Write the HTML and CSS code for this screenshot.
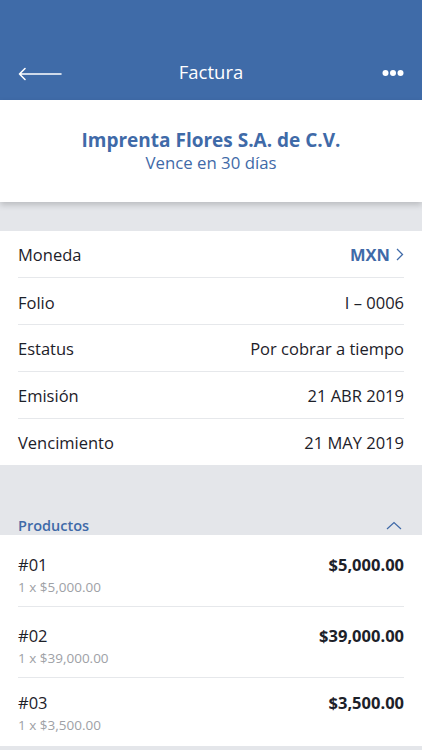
FILE: index.html
```html
<!DOCTYPE html>
<html lang="es">
<head>
<meta charset="utf-8">
<title>Factura</title>
<link rel="stylesheet" href="styles.css">
</head>
<body>
<div class="app">
  <header class="topbar">
    <svg class="back" width="44" height="14" viewBox="0 0 44 14"><path d="M1.5 7H43M7 1.5L1.5 7L7 12.5" fill="none" stroke="#fff" stroke-width="1.6" stroke-linecap="round" stroke-linejoin="round"/></svg>
    <h1 class="title">Factura</h1>
    <svg class="more" width="22" height="8" viewBox="0 0 22 8"><circle cx="3.5" cy="4" r="3" fill="#fff"/><circle cx="11" cy="4" r="3" fill="#fff"/><circle cx="18.5" cy="4" r="3" fill="#fff"/></svg>
  </header>
  <section class="client">
    <div class="client-name">Imprenta Flores S.A. de C.V.</div>
    <div class="client-due">Vence en 30 días</div>
  </section>
  <div class="gap"></div>
  <section class="details">
    <div class="row"><span class="label">Moneda</span><span class="value link">MXN <svg class="chev" width="8" height="13" viewBox="0 0 8 13"><path d="M1 1L6.5 6.5L1 12" fill="none" stroke="#3f6aa8" stroke-width="1.3"/></svg></span></div>
    <div class="row"><span class="label">Folio</span><span class="value">I – 0006</span></div>
    <div class="row"><span class="label">Estatus</span><span class="value">Por cobrar a tiempo</span></div>
    <div class="row"><span class="label">Emisión</span><span class="value">21 ABR 2019</span></div>
    <div class="row"><span class="label">Vencimiento</span><span class="value">21 MAY 2019</span></div>
  </section>
  <div class="section-head">
    <span class="section-title">Productos</span>
    <svg class="up" width="16" height="9" viewBox="0 0 16 9"><path d="M1 8L8 1.5L15 8" fill="none" stroke="#3f6aa8" stroke-width="1.2"/></svg>
  </div>
  <section class="products">
    <div class="prod">
      <div class="prod-left"><div class="prod-id">#01</div><div class="prod-sub">1 x $5,000.00</div></div>
      <div class="prod-total">$5,000.00</div>
    </div>
    <div class="prod">
      <div class="prod-left"><div class="prod-id">#02</div><div class="prod-sub">1 x $39,000.00</div></div>
      <div class="prod-total">$39,000.00</div>
    </div>
    <div class="prod">
      <div class="prod-left"><div class="prod-id">#03</div><div class="prod-sub">1 x $3,500.00</div></div>
      <div class="prod-total">$3,500.00</div>
    </div>
  </section>
</div>
</body>
</html>
```
FILE: styles.css
```css
* { box-sizing: border-box; margin: 0; padding: 0; }
html, body { width: 422px; height: 750px; overflow: hidden; }
body { font-family: "Open Sans", "Noto Sans", sans-serif; background: #e4e6ea; color: #1d2129; }
.app { display: flex; flex-direction: column; }
.topbar {
  height: 100px; background: #3f6ba8;
  display: flex; align-items: flex-end; justify-content: space-between;
  padding: 0 18px 18px 18px; position: relative;
}
.back { display: block; margin-bottom: 1px; }
.title { position: absolute; left: 0; right: 0; bottom: 16px; text-align: center; font-weight: 400; font-size: 18.5px; color: #fff; line-height: 24px; pointer-events: none; }
.more { display: block; margin-bottom: 5px; }
.client {
  background: #fff; height: 102px; text-align: center;
  display: flex; flex-direction: column; justify-content: center;
  box-shadow: 0 3px 6px rgba(0,0,0,0.18); position: relative; z-index: 1;
  padding-bottom: 2px;
}
.client-name { color: #3f6aa8; font-weight: 700; font-size: 19px; line-height: 24px; }
.client-due { color: #3f6aa8; font-size: 16.8px; line-height: 21px; }
.gap { height: 29px; }
.details { background: #fff; padding: 0 18px; }
.row {
  display: flex; justify-content: space-between; align-items: center;
  height: 47px; border-bottom: 1px solid #e6e8eb;
  font-size: 16.5px; color: #1d2129;
}
.row:nth-child(2) { padding-top: 3px; }
.row:last-child { border-bottom: none; height: 46px; }
.value.link { color: #3f6aa8; font-weight: 700; display: flex; align-items: center; gap: 6px; }
.chev { display: block; }
.section-head {
  height: 70px; display: flex; align-items: flex-end; justify-content: space-between;
  padding: 0 18px 0 18px;
}
.section-title { color: #3f6aa8; font-weight: 600; font-size: 14.5px; line-height: 18px; }
.up { display: block; margin-bottom: 5px; margin-right: 2px; }
.products { background: #fff; padding: 0 18px; border-bottom: 3px solid #e4e6ea; }
.prod {
  display: flex; justify-content: space-between; align-items: flex-start;
  padding: 19px 0 10px; border-bottom: 1px solid #e6e8eb; height: 72px;
}
.prod:first-child { height: 72px; padding-top: 19px; }
.prod:nth-child(2) { height: 71px; padding-top: 18px; }
.prod:last-child { border-bottom: none; height: 68px; padding-top: 14px; }
.prod-id { font-size: 16.5px; line-height: 22px; color: #1d2129; }
.prod-sub { font-size: 13.5px; line-height: 19px; margin-top: 1.5px; color: #9ea1a6; }
.prod-total { font-size: 16.5px; font-weight: 700; line-height: 22px; color: #1d2129; }
```
